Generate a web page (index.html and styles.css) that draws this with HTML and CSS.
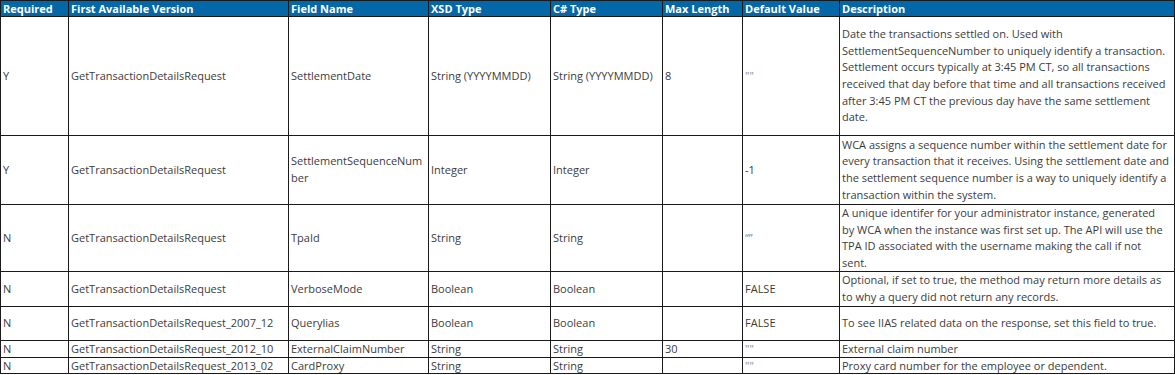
FILE: index.html
```html
<!DOCTYPE html>
<html>
<head>
<meta charset="utf-8">
<link rel="stylesheet" href="styles.css">
</head>
<body>
<table class="spec">
  <colgroup>
    <col class="c-req"><col class="c-ver"><col class="c-field"><col class="c-xsd"><col class="c-cs"><col class="c-max"><col class="c-def"><col class="c-desc">
  </colgroup>
  <thead>
    <tr class="head">
      <th>Required</th><th>First Available Version</th><th>Field Name</th><th>XSD Type</th><th>C# Type</th><th>Max Length</th><th>Default Value</th><th>Description</th>
    </tr>
  </thead>
  <tbody>
    <tr class="r1">
      <td>Y</td><td>GetTransactionDetailsRequest</td><td>SettlementDate</td><td>String (YYYYMMDD)</td><td>String (YYYYMMDD)</td><td>8</td><td class="q">""</td>
      <td class="desc">Date the transactions settled on. Used with SettlementSequenceNumber to uniquely identify a transaction. Settlement occurs typically at 3:45 PM CT, so all transactions received that day before that time and all transactions received after 3:45 PM CT the previous day have the same settlement date.</td>
    </tr>
    <tr class="r2">
      <td>Y</td><td>GetTransactionDetailsRequest</td><td>SettlementSequenceNumber</td><td>Integer</td><td>Integer</td><td></td><td>-1</td>
      <td class="desc">WCA assigns a sequence number within the settlement date for every transaction that it receives. Using the settlement date and the settlement sequence number is a way to uniquely identify a transaction within the system.</td>
    </tr>
    <tr class="r3">
      <td>N</td><td>GetTransactionDetailsRequest</td><td>TpaId</td><td>String</td><td>String</td><td></td><td class="q">“”</td>
      <td class="desc">A unique identifer for your administrator instance, generated<br>by WCA when the instance was first set up. The API will use the TPA ID associated with the username making the call if not<br>sent.</td>
    </tr>
    <tr class="r4">
      <td>N</td><td>GetTransactionDetailsRequest</td><td>VerboseMode</td><td>Boolean</td><td>Boolean</td><td></td><td>FALSE</td>
      <td class="desc">Optional, if set to true, the method may return more details as to why a query did not return any records.</td>
    </tr>
    <tr class="r5">
      <td>N</td><td>GetTransactionDetailsRequest_2007_12</td><td>Querylias</td><td>Boolean</td><td>Boolean</td><td></td><td>FALSE</td>
      <td class="desc">To see IIAS related data on the response, set this field to true.</td>
    </tr>
    <tr class="r6">
      <td>N</td><td>GetTransactionDetailsRequest_2012_10</td><td>ExternalClaimNumber</td><td>String</td><td>String</td><td>30</td><td class="q">""</td>
      <td class="desc">External claim number</td>
    </tr>
    <tr class="r7">
      <td>N</td><td>GetTransactionDetailsRequest_2013_02</td><td>CardProxy</td><td>String</td><td>String</td><td></td><td class="q">""</td>
      <td class="desc">Proxy card number for the employee or dependent.</td>
    </tr>
  </tbody>
</table>
</body>
</html>
```

FILE: styles.css
```css
html, body {
  margin: 0;
  padding: 0;
  background: #ffffff;
}

.spec {
  border-collapse: collapse;
  table-layout: fixed;
  width: 1174px;
  font-family: "Open Sans", "Noto Sans", sans-serif;
  font-size: 11px;
  line-height: 16.6px;
  color: #3c3c3c;
}

.c-req { width: 68px; }
.c-ver { width: 220px; }
.c-field { width: 140px; }
.c-xsd { width: 122px; }
.c-cs { width: 112px; }
.c-max { width: 80px; }
.c-def { width: 97px; }
.c-desc { width: 335px; }

.spec th,
.spec td {
  border: 1px solid #1a1a1a;
  padding: 0 2px;
  text-align: left;
  vertical-align: middle;
  overflow-wrap: anywhere;
}

.spec th {
  background: #0467a8;
  color: #ffffff;
  font-weight: 700;
  height: 15px;
  line-height: 15px;
}

.q {
  color: #8a8a8a;
}

.r1 { height: 119px; }
.r2 { height: 69px; }
.r3 { height: 66px; }
.r4 { height: 34px; }
.r5 { height: 34px; }
.r6 { height: 17px; }
.r7 { height: 16px; }

.r6 td,
.r7 td {
  line-height: 15px;
}
```
